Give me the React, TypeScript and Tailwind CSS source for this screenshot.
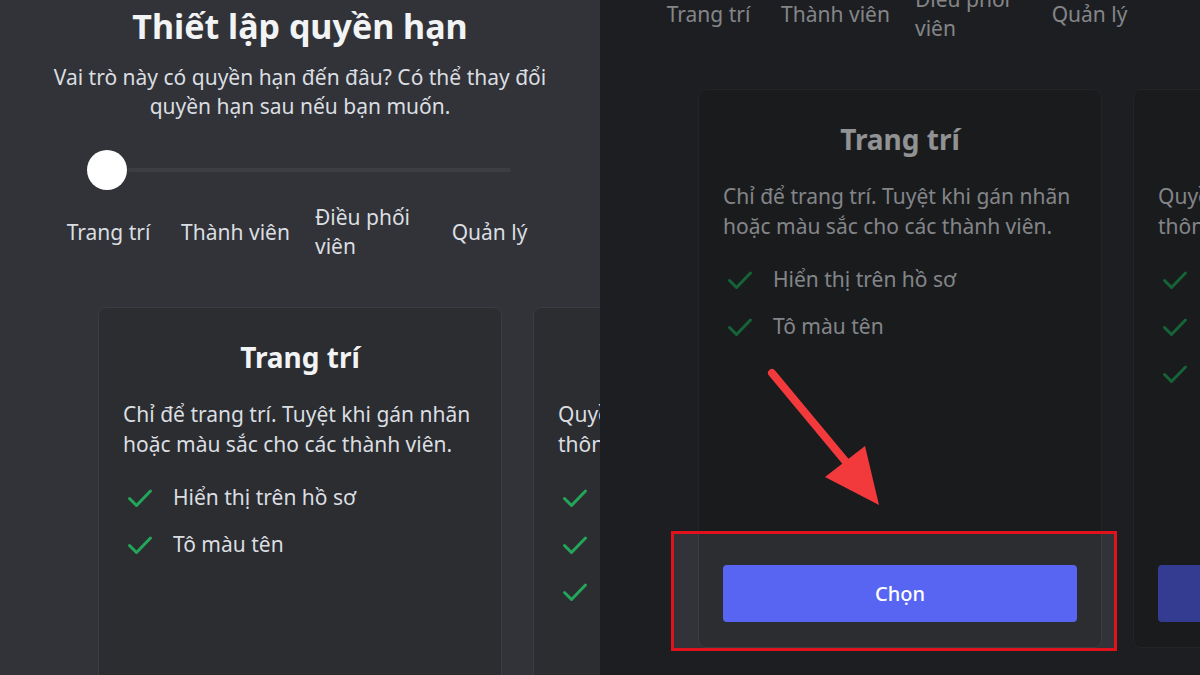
import React from 'react';

type Role = {
  title: string;
  desc: string;
  perks: string[];
};

const roles: Role[] = [
  {
    title: 'Trang trí',
    desc: 'Chỉ để trang trí. Tuyệt khi gán nhãn hoặc màu sắc cho các thành viên.',
    perks: ['Hiển thị trên hồ sơ', 'Tô màu tên'],
  },
  {
    title: 'Thành viên',
    desc: 'Quyền cơ bản cho các thành viên thông thường.',
    perks: ['Xem kênh', 'Gửi tin nhắn', 'Kết nối kênh thoại'],
  },
];

function Check() {
  return (
    <svg width="26" height="20" viewBox="0 0 26 20" fill="none" className="shrink-0">
      <path d="M2.5 10.5 L9.5 17.5 L23.5 3" stroke="#23a55a" strokeWidth="3" strokeLinecap="round" strokeLinejoin="round" />
    </svg>
  );
}

function RoleCard({ role }: { role: Role }) {
  return (
    <div className="w-[404px] h-[559px] shrink-0 rounded-lg border border-[#3a3c42] bg-[#2b2d31] flex flex-col px-6">
      <h2 className="pt-[31px] text-center text-[28px] leading-[36px] font-bold text-[#f2f3f5]">{role.title}</h2>
      <p className="mt-6 text-[21px] leading-[30px] text-[#dbdee1]">{role.desc}</p>
      <ul className="mt-[23px] flex flex-col gap-[15px]">
        {role.perks.map((p) => (
          <li key={p} className="flex items-center h-8">
            <span className="ml-[4px] flex"><Check /></span>
            <span className="ml-[20px] text-[21px] text-[#dbdee1]">{p}</span>
          </li>
        ))}
      </ul>
      <div className="flex-1" />
      <button className="mb-[25px] h-[57px] rounded bg-[#5865f2] text-[20px] font-medium text-white">Chọn</button>
    </div>
  );
}

function Screen() {
  return (
    <div className="w-[600px] flex flex-col items-center">
      <h1 className="pt-[5px] text-[34px] leading-[42px] font-bold text-[#f2f3f5]">Thiết lập quyền hạn</h1>
      <p className="mt-4 text-center text-[21px] leading-[29px] text-[#dbdee1]">
        Vai trò này có quyền hạn đến đâu? Có thể thay đổi
        <br />
        quyền hạn sau nếu bạn muốn.
      </p>

      {/* slider */}
      <div className="self-start ml-[87px] mt-[29px] w-[424px] h-10 flex items-center">
        <div className="w-10 h-10 shrink-0 rounded-full bg-white" />
        <div className="flex-1 h-[4px] rounded-full bg-[#3c3e44]" />
      </div>

      <div className="self-start ml-[45px] mt-[13px] grid grid-cols-[repeat(4,127px)] items-center justify-items-center text-[21px] leading-[29px] text-[#dbdee1]">
        <span>Trang trí</span>
        <span>Thành viên</span>
        <span className="text-left">
          Điều phối
          <br />
          viên
        </span>
        <span>Quản lý</span>
      </div>

      <div className="self-stretch mt-[46px] flex gap-[31px] pl-[98px]">
        {roles.map((r) => (
          <RoleCard key={r.title} role={r} />
        ))}
      </div>
    </div>
  );
}

export default function App() {
  return (
    <div className="w-[1200px] h-[675px] flex overflow-hidden bg-[#313338] font-['Noto_Sans','Open_Sans',sans-serif]">
      <div className="w-[600px] h-[675px] shrink-0 overflow-hidden bg-[#313338]">
        <Screen />
      </div>

      <div className="relative w-[600px] h-[675px] shrink-0 overflow-hidden bg-[#313338]">
        <div className="-mt-[218px]">
          <Screen />
        </div>

        {/* spotlight on the button with dim overlay */}
        <div className="absolute left-[71px] top-[531px] w-[446px] h-[120px] border-[3px] border-[#e0121c] shadow-[0_0_0_1400px_rgba(0,0,0,0.4)]" />

        <svg className="absolute inset-0 pointer-events-none" width="600" height="675" viewBox="0 0 600 675">
          <line x1="172" y1="373" x2="246" y2="462" stroke="#f23a3c" strokeWidth="8" strokeLinecap="round" />
          <polygon points="279,505 225,477 265,446" fill="#f23a3c" />
        </svg>
      </div>
    </div>
  );
}
